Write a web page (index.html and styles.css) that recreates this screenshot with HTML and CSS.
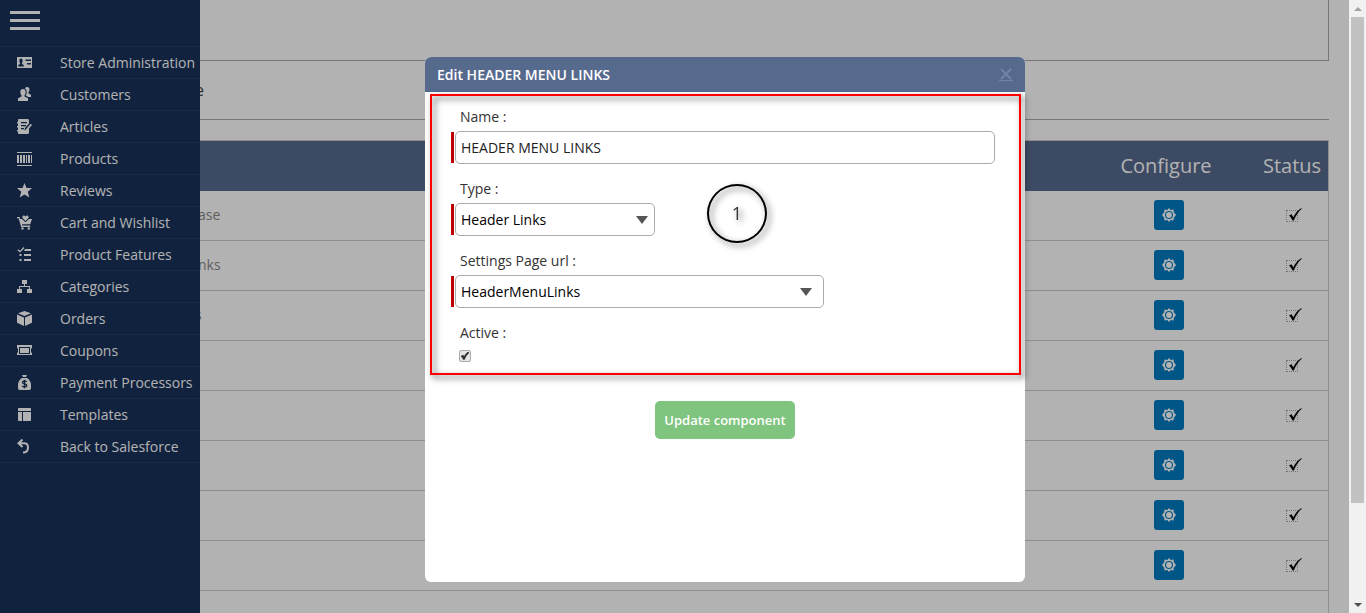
FILE: index.html
```html
<!DOCTYPE html>
<html lang="en">
<head>
  <meta charset="UTF-8">
  <meta name="viewport" content="width=device-width, initial-scale=1">
  <title>Edit HEADER MENU LINKS</title>
  <link rel="stylesheet" href="styles.css">
</head>
<body>

  <!-- Icons -->
  <svg class="sprite" aria-hidden="true">
    <symbol id="i-store" viewBox="0 0 15 15">
      <path d="M0 2h15v11H0z"/>
      <path class="cut" d="M4 3.500c1 0 1.600.8 1.600 1.900S5.300 7.600 5 8v1l1.800 1v1.500H1.300V10L3 9V8c-.4-.4-.6-1.500-.6-2.600S3 3.500 4 3.500zM8.500 4.500H14V6H8.500zM10 8h4v1.500h-4z"/>
    </symbol>
    <symbol id="i-customers" viewBox="0 0 15 15">
      <path d="M10.200 0c1.500 0 2.300 1 2.300 2.600 0 1.300-.5 2.200-1 2.700v1.200l2.500 1.300v2.200H11L8.600 8.300c.9-1 1.100-2 1.100-3.600C9.700 3.300 9 2 8 1.700 8.300.6 9.100 0 10.200 0z"/>
      <path d="M6 2c1.700 0 2.700 1.200 2.700 3 0 1.500-.6 2.600-1.200 3.200v1.300L11 11.200V14H1v-2.800l3.500-1.700V8.200C3.900 7.600 3.300 6.500 3.300 5 3.300 3.200 4.300 2 6 2z"/>
    </symbol>
    <symbol id="i-articles" viewBox="0 0 15 15">
      <path d="M2 0h8.500C11.500 0 12 .6 12 1.500v3L8 9l-.5 2.500 2.500-.5 2-2v4.500c0 .9-.6 1.500-1.500 1.500H2c-.6 0-1-.4-1-1v-1.500H0V11h1V8.500H0V7h1V4.500H0V3h1V1c0-.6.400-1 1-1z"/>
      <path class="cut" d="M4 3h6v1.300H4zM4 6h5v1.300H4zM4 9h3v1.300H4z"/>
      <path d="M13.700 4.800L15 6l-5.200 6-1.500.5.300-1.700z"/>
    </symbol>
    <symbol id="i-products" viewBox="0 0 15 15">
      <path d="M0 1h15v1H0zM0 14h15v1H0zM0 4h2v8H0zM3 4h2v8H3zM6 4h2v8H6zM9 4h1v8H9zM11 4h2v8h-2zM14 4h1v8h-1z"/>
    </symbol>
    <symbol id="i-reviews" viewBox="0 0 15 15">
      <path d="M7.500 0l2 5H15l-4.200 3.800 1.500 5.700-4.800-3-4.800 3 1.500-5.700L0 5h5.500z"/>
    </symbol>
    <symbol id="i-cart" viewBox="0 0 15 15">
      <path d="M0 2h2.500l.7 2H5l3.500 3.300L12 4h3l-1.800 5.300H5l.3 1.200h7.900V12H4.200L1.500 3.300H0z"/>
      <path d="M8.500 6L5.800 3.200C4.900 2 5.500.5 6.800.5c.8 0 1.300.4 1.700 1 .4-.6.9-1 1.700-1 1.300 0 1.900 1.500 1 2.700z"/>
      <circle cx="5.500" cy="13.500" r="1.200"/><circle cx="11.800" cy="13.500" r="1.200"/>
    </symbol>
    <symbol id="i-features" viewBox="0 0 15 15">
      <path d="M.3 3.200l1-1L3 3.800 6.500 0l1 1L3 5.500zM8 2h6v2H7zM7 7h7v2H7zM7 12h7v2H7zM2.500 7h2v2h-2zM2.500 12h2v2h-2z"/>
    </symbol>
    <symbol id="i-categories" viewBox="0 0 15 15">
      <path d="M5 1h5v4H8v2h5v3h2v4h-5v-4h2V8H3v2h2v4H0v-4h2V7h5V5H5z"/>
    </symbol>
    <symbol id="i-orders" viewBox="0 0 15 15">
      <path d="M7.500 0L14 2.300 7.500 5 1 2.300zM0 3.500l7 3V15l-7-3.200zM15 3.500l-7 3V15l7-3.200z"/>
    </symbol>
    <symbol id="i-coupons" viewBox="0 0 15 15">
      <path d="M0 2h15v3l-1 .8v3.400l1 .8v2H0v-2l1-.8V5.800L0 5z"/>
      <path class="cut" d="M2 4h11v7H2z"/><path d="M3 5h9v5H3z"/>
    </symbol>
    <symbol id="i-payment" viewBox="0 0 15 15">
      <path d="M5 0h5L9 2H6zM5 3h5c2.500 1.500 4 4 4 6.500V13c0 1.200-.6 2-1.800 2H2.800C1.600 15 1 14.200 1 13V9.500C1 7 2.500 4.500 5 3z"/>
      <path class="cut-line" d="M9.500 7c-.5-.8-1.200-1-2-1-1.200 0-2 .6-2 1.500 0 2.200 4.200.8 4.200 3 0 1-.9 1.500-2.200 1.500-1 0-1.800-.4-2.200-1.200M7.500 4.800v8.400"/>
    </symbol>
    <symbol id="i-templates" viewBox="0 0 15 15">
      <path d="M2 1h11c.6 0 1 .4 1 1v2H1V2c0-.6.400-1 1-1zM1 5h4v9H2c-.6 0-1-.4-1-1zM6 5h8v8c0 .6-.4 1-1 1H6z"/>
    </symbol>
    <symbol id="i-back" viewBox="0 0 15 15">
      <path class="hook" d="M5.500 .5L1.500 4.200l4 3.800M1.500 4.200H7c2.300 0 4 1.700 4 4.300 0 2.800-1.800 5-5 5"/>
    </symbol>
    <symbol id="i-gear" viewBox="0 0 14 14">
      <path d="M7 0l1.600 2 2.900-.5.300 2.800L14 7l-2.200 2.700-.3 2.800-2.900-.5L7 14l-1.600-2-2.900.5-.3-2.800L0 7l2.200-2.700.3-2.800 2.900.5z"/>
      <circle class="gear-hole" cx="7" cy="7" r="4"/><circle cx="7" cy="7" r="2.900"/>
    </symbol>
    <symbol id="i-check" viewBox="0 0 14 14">
      <path d="M1 7.500l2.500-1.300 1.800 3C7.500 5 10 2 13.500 0l.2.700C10.500 3.500 8 7 5.800 12.500H4.500C3.500 10.300 2.500 8.800 1 7.500z"/>
    </symbol>
  </svg>

  <div class="viewport">

    <nav class="sidebar">
      <button class="menu-toggle" type="button" aria-label="Menu"><span></span><span></span><span></span></button>
      <ul>
        <li><a href="#"><svg><use href="#i-store"/></svg>Store Administration</a></li>
        <li><a href="#"><svg><use href="#i-customers"/></svg>Customers</a></li>
        <li><a href="#"><svg><use href="#i-articles"/></svg>Articles</a></li>
        <li><a href="#"><svg><use href="#i-products"/></svg>Products</a></li>
        <li><a href="#"><svg><use href="#i-reviews"/></svg>Reviews</a></li>
        <li><a href="#"><svg><use href="#i-cart"/></svg>Cart and Wishlist</a></li>
        <li><a href="#"><svg><use href="#i-features"/></svg>Product Features</a></li>
        <li><a href="#"><svg><use href="#i-categories"/></svg>Categories</a></li>
        <li><a href="#"><svg><use href="#i-orders"/></svg>Orders</a></li>
        <li><a href="#"><svg><use href="#i-coupons"/></svg>Coupons</a></li>
        <li><a href="#"><svg><use href="#i-payment"/></svg>Payment Processors</a></li>
        <li><a href="#"><svg><use href="#i-templates"/></svg>Templates</a></li>
        <li><a href="#"><svg><use href="#i-back"/></svg>Back to Salesforce</a></li>
      </ul>
    </nav>

    <main class="page">
      <div class="panel"></div>
      <h2>e</h2>
      <table class="components">
        <thead>
          <tr><th></th><th class="col-configure">Configure</th><th class="col-status">Status</th></tr>
        </thead>
        <tbody>
          <tr><td class="wide">ase</td><td><button class="gear" type="button" aria-label="Configure"><svg><use href="#i-gear"/></svg></button></td><td><label class="status"><input type="checkbox" checked aria-label="Status"><svg><use href="#i-check"/></svg></label></td></tr>
          <tr><td class="wide">nks</td><td><button class="gear" type="button" aria-label="Configure"><svg><use href="#i-gear"/></svg></button></td><td><label class="status"><input type="checkbox" checked aria-label="Status"><svg><use href="#i-check"/></svg></label></td></tr>
          <tr><td>s</td><td><button class="gear" type="button" aria-label="Configure"><svg><use href="#i-gear"/></svg></button></td><td><label class="status"><input type="checkbox" checked aria-label="Status"><svg><use href="#i-check"/></svg></label></td></tr>
          <tr><td></td><td><button class="gear" type="button" aria-label="Configure"><svg><use href="#i-gear"/></svg></button></td><td><label class="status"><input type="checkbox" checked aria-label="Status"><svg><use href="#i-check"/></svg></label></td></tr>
          <tr><td></td><td><button class="gear" type="button" aria-label="Configure"><svg><use href="#i-gear"/></svg></button></td><td><label class="status"><input type="checkbox" checked aria-label="Status"><svg><use href="#i-check"/></svg></label></td></tr>
          <tr><td></td><td><button class="gear" type="button" aria-label="Configure"><svg><use href="#i-gear"/></svg></button></td><td><label class="status"><input type="checkbox" checked aria-label="Status"><svg><use href="#i-check"/></svg></label></td></tr>
          <tr><td></td><td><button class="gear" type="button" aria-label="Configure"><svg><use href="#i-gear"/></svg></button></td><td><label class="status"><input type="checkbox" checked aria-label="Status"><svg><use href="#i-check"/></svg></label></td></tr>
          <tr><td></td><td><button class="gear" type="button" aria-label="Configure"><svg><use href="#i-gear"/></svg></button></td><td><label class="status"><input type="checkbox" checked aria-label="Status"><svg><use href="#i-check"/></svg></label></td></tr>
          <tr><td></td><td></td><td></td></tr>
        </tbody>
      </table>
    </main>

    <!-- Edit dialog -->
    <div class="overlay">
      <div class="modal" role="dialog" aria-labelledby="modal-title">
        <div class="modal-header">
          <h3 id="modal-title">Edit HEADER MENU LINKS</h3>
          <button class="close" type="button" aria-label="Close">
            <svg viewBox="0 0 14 14"><path d="M2 1l10 10M12 1L2 11"/><path class="underline" d="M0 12.500h14"/></svg>
          </button>
        </div>
        <form>
          <div class="fields">
            <div class="field">
              <label for="name">Name :</label>
              <div class="required"><input id="name" type="text" value="HEADER MENU LINKS"></div>
            </div>
            <div class="field">
              <label for="type">Type :</label>
              <div class="required select type">
                <select id="type"><option>Header Links</option></select>
              </div>
            </div>
            <div class="field">
              <label for="url">Settings Page url :</label>
              <div class="required select url">
                <select id="url"><option>HeaderMenuLinks</option></select>
              </div>
            </div>
            <div class="field">
              <label for="active">Active :</label>
              <div class="tick">
                <input id="active" type="checkbox" checked>
                <svg><use href="#i-check"/></svg>
              </div>
            </div>
            <span class="step">1</span>
          </div>
          <button class="update" type="button">Update component</button>
        </form>
      </div>
    </div>

  </div>

  <div class="scrollbar" aria-hidden="true">
    <span class="arrow up"></span>
    <div class="track"><div class="thumb"></div></div>
    <span class="arrow down"></span>
  </div>

</body>
</html>
```

FILE: styles.css
```css
* { margin:0; padding:0; box-sizing:border-box; }
body {
  display:flex;
  height:100vh;
  overflow:hidden;
  background:#fff;
  font-family:'Open Sans',sans-serif;
  font-size:14px;
  line-height:20px;
}
button, input, select { font-family:inherit; font-size:inherit; }
button { border:none; cursor:pointer; }
.sprite { position:absolute; width:0; height:0; }
.viewport {
  position:relative;
  flex:1;
  display:flex;
  overflow:hidden;
}

/* Sidebar */
.sidebar {
  position:relative;
  z-index:1;
  flex:none;
  width:200px;
  background:#17315a;
}
.menu-toggle {
  display:flex;
  flex-direction:column;
  gap:5px;
  width:50px;
  height:46px;
  padding:11px 10px;
  background:none;
}
.menu-toggle span { width:30px; height:3px; flex:none; background:#fff; }
.sidebar ul { list-style:none; border-top:1px solid #233f69; }
.sidebar li { border-bottom:1px solid #233f69; }
.sidebar a {
  display:flex;
  align-items:center;
  gap:28px;
  height:31px;
  padding-left:17px;
  color:#fff;
  text-decoration:none;
  white-space:nowrap;
}
.sidebar svg { width:15px; height:15px; flex:none; fill:#fff; }
.cut { fill:#17315a; }
.cut-line { fill:none; stroke:#17315a; stroke-width:1.3; }
.hook { fill:none; stroke:#fff; stroke-width:2; }

/* Page behind the dialog */
.page { flex:1; margin-left:-5px; padding-right:20px; }
.panel { height:61px; border:solid #aaa; border-width:0 1px 1px 0; }
.page h2 {
  height:59px;
  padding-top:19px;
  margin-bottom:20px;
  border-bottom:1px solid #aaa;
  color:#444;
  font-size:16px;
  font-weight:400;
}
.components {
  width:100%;
  border-collapse:separate;
  border-spacing:0;
  table-layout:fixed;
  border:solid #ccc;
  border-width:1px 1px 0 0;
}
.components th {
  height:50px;
  background:#566a8e;
  color:#fff;
  font-size:20px;
  font-weight:400;
}
.components td {
  height:50px;
  padding-bottom:2px;
  border-bottom:1px solid #ccc;
  color:#888;
  text-align:center;
}
.components td:first-child { text-align:left; }
.components td.wide { padding-left:3px; }
.components .col-configure { width:174px; padding-right:6px; }
.col-status { width:72px; }
.gear {
  display:inline-flex;
  align-items:center;
  justify-content:center;
  width:30px;
  height:30px;
  border-radius:3px;
  background:#007bc2;
  vertical-align:middle;
}
.gear svg { width:14px; height:14px; fill:#fff; }
.gear-hole { fill:#007bc2; }
.status {
  position:relative;
  display:inline-block;
  width:12px;
  height:12px;
  vertical-align:middle;
}
.status input {
  display:block;
  width:12px;
  height:12px;
  appearance:none;
  border:1px dotted #aaa;
}
.status svg { position:absolute; left:2px; top:-2px; width:14px; height:14px; }

/* Dialog */
.overlay {
  position:absolute;
  inset:0;
  z-index:2;
  display:flex;
  justify-content:center;
  align-items:flex-start;
  padding:57px 0 31px 101px;
  background:rgba(0,0,0,.3);
}
.modal {
  width:600px;
  min-height:100%;
  border-radius:6px;
  background:#fff;
}
.modal-header {
  display:flex;
  align-items:center;
  justify-content:space-between;
  height:35px;
  padding:0 12px;
  border-radius:6px 6px 0 0;
  background:#566a8e;
}
.modal-header h3 { color:#fff; font-size:14px; font-weight:600; }
.close { width:14px; height:14px; background:none; }
.close svg { display:block; width:14px; height:14px; fill:none; stroke:#7184a4; stroke-width:2; }
.close .underline { stroke-width:1; }
.fields {
  position:relative;
  margin:2px 4px 0 5px;
  padding:13px 26px 13px 21px;
}
.fields::before {
  content:'';
  position:absolute;
  inset:0;
  border:2px solid #f00;
  filter:drop-shadow(3px 3px 3px rgba(0,0,0,.7));
  pointer-events:none;
}
.field { margin-bottom:15px; color:#333; }
.field:last-of-type { margin-bottom:0; }
.field label { display:block; margin:0 0 4px 9px; }
.required { display:flex; align-items:center; gap:1px; }
.required::before { content:''; width:3px; height:31px; background:#c00000; }
.required input, .required select {
  flex:1;
  height:33px;
  padding:0 5px;
  border:1px solid #aaa;
  border-radius:5px;
  background:#fff;
  color:#222;
}
.required select { appearance:none; color:#000; }
.select { position:relative; }
.select::after {
  content:'';
  position:absolute;
  right:7px;
  border:solid transparent;
  border-width:8px 6px 0;
  border-top-color:#555;
}
.type { width:204px; }
.url { width:373px; }
.url::after { right:12px; }
.tick { position:relative; width:12px; height:12px; margin:7px 0 0 8px; }
.tick input {
  display:block;
  width:12px;
  height:12px;
  appearance:none;
  border:1px solid #aaa;
  border-radius:2px;
  background:#e4e4e4;
}
.tick svg { position:absolute; left:2px; top:2px; width:8px; height:8px; fill:#333; stroke:#333; stroke-width:2; }
.step {
  position:absolute;
  left:277px;
  top:90px;
  width:60px;
  height:59px;
  border:2px solid #000;
  border-radius:50%;
  color:#333;
  font-size:18px;
  line-height:55px;
  text-align:center;
}
.step { filter:drop-shadow(3px 3px 3px rgba(0,0,0,.6)); }
.update {
  display:block;
  width:140px;
  height:38px;
  margin:26px auto 0;
  border-radius:5px;
  background:#7fc47f;
  color:#fff;
  font-size:13px;
  font-weight:600;
}

/* Scrollbar */
.scrollbar {
  display:flex;
  flex-direction:column;
  width:17px;
  background:#f1f1f1;
}
.arrow { display:flex; align-items:center; justify-content:center; height:17px; }
.arrow::before { content:''; border:solid transparent; }
.up::before { border-width:0 4px 4px; border-bottom-color:#a3a3a3; }
.down::before { border-width:4px 4px 0; border-top-color:#505050; }
.track { flex:1; padding:0 2px; }
.thumb { height:84%; background:#c1c1c1; }
```
